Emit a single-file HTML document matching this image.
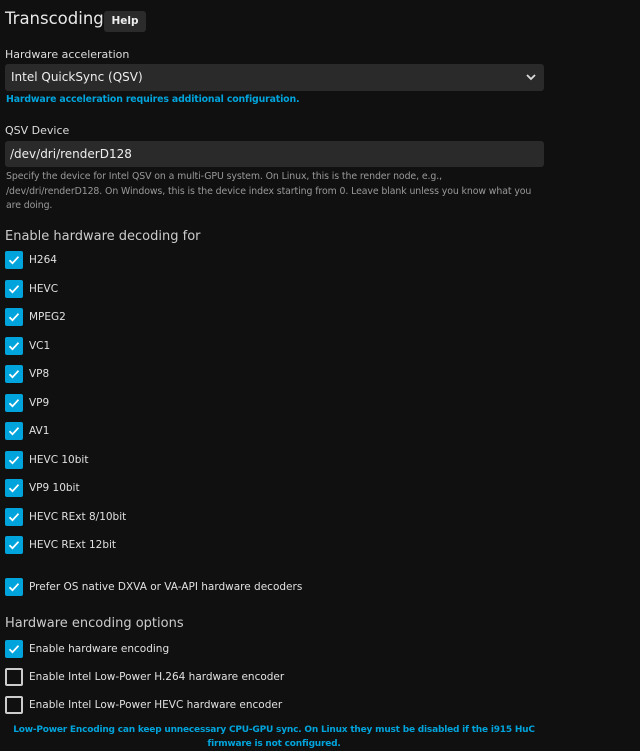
<!DOCTYPE html>
<html><head><meta charset="utf-8"><style>
body{margin:0;background:#101010;color:#ddd;font-family:"DejaVu Sans","Liberation Sans",sans-serif;width:640px;height:750px;overflow:hidden;position:relative}
.a{position:absolute;white-space:nowrap}
.box{position:absolute;left:5px;width:18px;height:18px;border-radius:2px;background:#00a4dc}
.box svg{position:absolute;left:2px;top:2px}
.un{background:transparent;border:2px solid #ccc;width:14px;height:14px}
.lbl{position:absolute;left:29px;font-size:10.5px;color:#e0e0e0;line-height:14px}
.in{position:absolute;left:5px;width:539px;background:#2a2a2a;border-radius:3px;font-size:12px;color:#eee}
.blue{color:#00a4dc;font-weight:bold;font-size:9px}
</style></head><body>
<div class="a" style="left:5px;top:9px;font-size:16.5px;color:#e8e8e8">Transcoding</div>
<div class="a" style="left:104px;top:11px;width:42px;height:21px;background:#2b2b2b;border-radius:3px;font-size:10.5px;font-weight:bold;text-align:center;line-height:21px;color:#eee">Help</div>
<div class="a" style="left:5px;top:48px;font-size:11px;color:#ddd">Hardware acceleration</div>
<div class="in" style="top:64px;height:27px;line-height:27px;text-indent:6px">Intel QuickSync (QSV)
<svg style="position:absolute;right:8px;top:10px" width="10" height="7" viewBox="0 0 10 7"><path d="M1 1l4 4 4-4" stroke="#ddd" stroke-width="1.8" fill="none"/></svg></div>
<div class="a blue" style="left:6px;top:94px;font-size:9.4px;letter-spacing:-0.15px">Hardware acceleration requires additional configuration.</div>
<div class="a" style="left:5px;top:124px;font-size:11px;color:#ddd">QSV Device</div>
<div class="in" style="top:141px;height:26px;line-height:26px;text-indent:5px">/dev/dri/renderD128</div>
<div class="a" style="left:6px;top:170px;font-size:9.4px;letter-spacing:-0.1px;color:#999;line-height:14.5px">Specify the device for Intel QSV on a multi-GPU system. On Linux, this is the render node, e.g.,<br>/dev/dri/renderD128. On Windows, this is the device index starting from 0. Leave blank unless you know what you<br>are doing.</div>
<div class="a" style="left:5px;top:229px;font-size:13px;color:#ccc">Enable hardware decoding for</div>
<div id="cbs"></div>
<div class="a" style="left:5px;top:616px;font-size:13px;color:#ccc">Hardware encoding options</div>
<div class="a blue" style="left:0;width:548px;text-align:center;top:723px;line-height:14px;white-space:normal;letter-spacing:-0.2px">Low-Power Encoding can keep unnecessary CPU-GPU sync. On Linux they must be disabled if the i915 HuC firmware is not configured.</div>
<script>
var chk='<svg width="14" height="14" viewBox="0 0 14 14"><path d="M2.5 7.2l3 3 6-6.5" stroke="#fff" stroke-width="1.8" fill="none"/></svg>';
var items=[["H264",260],["HEVC",289],["MPEG2",317],["VC1",346],["VP8",374],["VP9",403],["AV1",431],["HEVC 10bit",460],["VP9 10bit",488],["HEVC RExt 8/10bit",517],["HEVC RExt 12bit",545],["Prefer OS native DXVA or VA-API hardware decoders",587],["Enable hardware encoding",649],["Enable Intel Low-Power H.264 hardware encoder",677,1],["Enable Intel Low-Power HEVC hardware encoder",705,1]];
var h='';items.forEach(function(i){h+='<div class="box'+(i[2]?' un':'')+'" style="top:'+(i[1]-9)+'px">'+(i[2]?'':chk)+'</div><div class="lbl" style="top:'+(i[1]-7)+'px">'+i[0]+'</div>';});
document.getElementById('cbs').innerHTML=h;
</script>
</body></html>
